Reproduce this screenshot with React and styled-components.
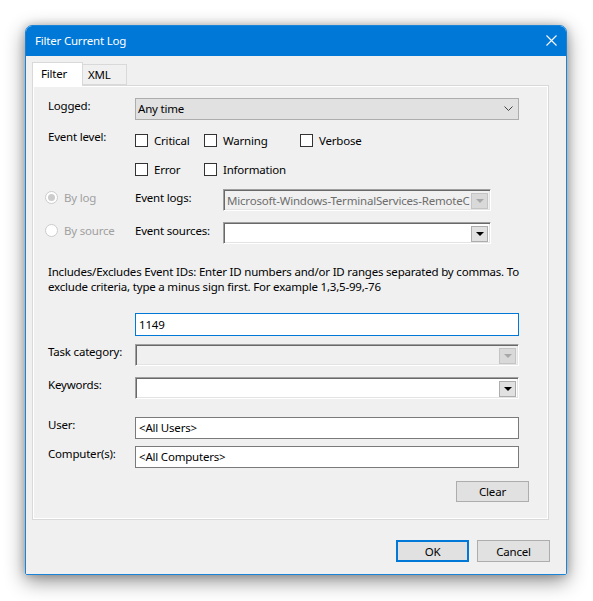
import React from 'react';
import styled, {createGlobalStyle} from "styled-components";

const GlobalStyle = createGlobalStyle`
  html, body {
    margin: 0;
    background: #fff;
  }
  body {
    font-family: "Noto Sans", "Open Sans", sans-serif;
    font-size: 11.5px;
    letter-spacing: -0.2px;
    color: #000;
  }
  * { box-sizing: border-box; }
`;

function Chevron() {
  return (
    <svg width="9" height="5" viewBox="0 0 9 5">
      <path d="M0.5 0.5 L4.5 4.5 L8.5 0.5" fill="none" stroke="#444" strokeWidth="1"/>
    </svg>
  );
}

function ComboBox({disabled, value, width}) {
  return (
    <Combo $disabled={disabled} $width={width}>
      <ComboText $disabled={disabled}>{value}</ComboText>
      <DropButton $disabled={disabled}><Triangle $disabled={disabled}/></DropButton>
    </Combo>
  );
}

function Check({label}) {
  return (
    <CheckItem>
      <CheckBox/>
      <span>{label}</span>
    </CheckItem>
  );
}

function App() {
  return (
    <>
      <GlobalStyle/>
      <Page>
        <Window>
          <TitleBar>
            <Title>Filter Current Log</Title>
            <CloseIcon>
              <svg width="11" height="11" viewBox="0 0 11 11">
                <path d="M0.5 0.5 L10.5 10.5 M10.5 0.5 L0.5 10.5" stroke="#fff" strokeWidth="1.1"/>
              </svg>
            </CloseIcon>
          </TitleBar>
          <Body>
            <TabStrip>
              <Tab $active>Filter</Tab>
              <Tab>XML</Tab>
            </TabStrip>
            <Panel>
              <Row>
                <Label>Logged:</Label>
                <DropList>
                  <span>Any time</span>
                  <Chevron/>
                </DropList>
              </Row>

              <Row $mt={9}>
                <Label>Event level:</Label>
                <LevelGrid>
                  <Check label="Critical"/>
                  <Check label="Warning"/>
                  <Check label="Verbose"/>
                  <Check label="Error"/>
                  <Check label="Information"/>
                </LevelGrid>
              </Row>

              <Row $mt={11}>
                <RadioItem>
                  <Radio $checked/>
                  <span>By log</span>
                </RadioItem>
                <Label $w={88} $pt={1}>Event logs:</Label>
                <ComboBox disabled width={268} value="Microsoft-Windows-TerminalServices-RemoteC"/>
              </Row>

              <Row $mt={11}>
                <RadioItem>
                  <Radio/>
                  <span>By source</span>
                </RadioItem>
                <Label $w={88} $pt={1}>Event sources:</Label>
                <ComboBox width={268} value=""/>
              </Row>

              <Description>
                Includes/Excludes Event IDs: Enter ID numbers and/or ID ranges separated by commas. To<br/>
                exclude criteria, type a minus sign first. For example 1,3,5-99,-76
              </Description>

              <Row $mt={19}>
                <Label/>
                <TextInput $focused $h={23}>1149</TextInput>
              </Row>

              <Row $mt={8}>
                <Label>Task category:</Label>
                <ComboBox disabled value=""/>
              </Row>

              <Row $mt={11}>
                <Label>Keywords:</Label>
                <ComboBox value=""/>
              </Row>

              <Row $mt={18}>
                <Label>User:</Label>
                <TextInput>&lt;All Users&gt;</TextInput>
              </Row>

              <Row $mt={7}>
                <Label>Computer(s):</Label>
                <TextInput>&lt;All Computers&gt;</TextInput>
              </Row>

              <ClearRow>
                <Button $h={21}>Clear</Button>
              </ClearRow>
            </Panel>

            <ButtonRow>
              <Button $default>OK</Button>
              <Button>Cancel</Button>
            </ButtonRow>
          </Body>
        </Window>
      </Page>
    </>
  );
}

const Page = styled.div`
  padding: 25px 26px 26px 25px;
`;

const Window = styled.div`
  width: 542px;
  height: 550px;
  display: flex;
  flex-direction: column;
  border: 1px solid #1a84d8;
  border-radius: 7px 7px 2px 2px;
  overflow: hidden;
  box-shadow: 0 6px 20px rgba(0, 0, 0, 0.45), 0 0 8px rgba(0, 0, 0, 0.2);
`;

const TitleBar = styled.div`
  height: 30px;
  flex: none;
  display: flex;
  align-items: center;
  justify-content: space-between;
  padding: 0 8px 1px 9px;
  background: #0078d7;
`;

const Title = styled.span`
  color: #fff;
  font-size: 11.5px;
`;

const CloseIcon = styled.span`
  display: flex;
  margin-right: 1px;
`;

const Body = styled.div`
  flex: 1;
  display: flex;
  flex-direction: column;
  background: #f0f0f0;
  padding: 6px 16px 12px 6px;
`;

const TabStrip = styled.div`
  display: flex;
  align-items: flex-end;
  height: 23px;
  position: relative;
  z-index: 1;
`;

const Tab = styled.div`
  height: ${p => p.$active ? 24 : 21}px;
  width: ${p => p.$active ? 51 : 44}px;
  margin-bottom: ${p => p.$active ? -1 : 0}px;
  padding: ${p => p.$active ? '3px 0 0 8px' : '2px 0 0 5px'};
  border: 1px solid #d9d9d9;
  border-bottom: ${p => p.$active ? 'none' : '1px solid #d9d9d9'};
  border-left: ${p => p.$active ? '1px solid #d9d9d9' : 'none'};
  background: ${p => p.$active ? '#fff' : '#f0f0f0'};
  line-height: 15px;
`;

const Panel = styled.div`
  height: 435px;
  margin-right: 1px;
  border: 1px solid #d9d9d9;
  box-shadow: inset 1px 1px 0 #fff, inset -1px -1px 0 #fff;
  padding: 12px 29px 17px 15px;
  display: flex;
  flex-direction: column;
`;

const Row = styled.div`
  display: flex;
  align-items: flex-start;
  margin-top: ${p => p.$mt || 0}px;
`;

const Label = styled.div`
  flex: none;
  width: ${p => p.$w || 87}px;
  padding-top: ${p => p.$pt || 0}px;
  line-height: 15px;
  white-space: nowrap;
`;

const DropList = styled.div`
  flex: 1;
  height: 22px;
  display: flex;
  align-items: center;
  justify-content: space-between;
  padding: 0 5px 1px 2px;
  background: #e1e1e1;
  border: 1px solid #adadad;
`;

const LevelGrid = styled.div`
  display: grid;
  grid-template-columns: 69px 96px auto;
  grid-auto-rows: 18px;
  row-gap: 11px;
  padding-top: 2px;
`;

const CheckItem = styled.label`
  display: flex;
  align-items: center;
  gap: 6px;
  white-space: nowrap;
`;

const CheckBox = styled.span`
  width: 13px;
  height: 13px;
  flex: none;
  border: 1px solid #333;
  background: #fff;
`;

const RadioItem = styled.div`
  flex: none;
  width: 90px;
  margin-left: -3px;
  display: flex;
  align-items: center;
  gap: 6px;
  height: 16px;
  color: #a0a0a0;
`;

const Radio = styled.span`
  width: 13px;
  height: 13px;
  flex: none;
  border-radius: 50%;
  border: 1px solid #cccccc;
  background: #fff;
  display: flex;
  align-items: center;
  justify-content: center;
  &::after {
    content: "";
    display: ${p => p.$checked ? 'block' : 'none'};
    width: 7px;
    height: 7px;
    border-radius: 50%;
    background: #cccccc;
  }
`;

const Combo = styled.div`
  ${p => p.$width ? `width: ${p.$width}px; flex: none;` : 'flex: 1;'}
  height: 22px;
  display: flex;
  align-items: center;
  padding: 0 2px 0 3px;
  background: ${p => p.$disabled ? '#f0f0f0' : '#fff'};
  border-style: solid;
  border-width: 1px;
  border-color: #a0a0a0 #fff #fff #a0a0a0;
  box-shadow: inset 1px 1px 0 #696969, inset -1px -1px 0 #e3e3e3;
  overflow: hidden;
`;

const ComboText = styled.span`
  flex: 1;
  min-width: 0;
  overflow: hidden;
  white-space: nowrap;
  color: ${p => p.$disabled ? '#6d6d6d' : '#000'};
`;

const DropButton = styled.span`
  width: 17px;
  height: 16px;
  flex: none;
  margin-top: 1px;
  display: flex;
  align-items: center;
  justify-content: center;
  background: ${p => p.$disabled ? '#d9d9d9' : '#e1e1e1'};
  border: 1px solid ${p => p.$disabled ? '#c4c4c4' : '#adadad'};
`;

const Triangle = styled.span`
  width: 0;
  height: 0;
  margin-top: 1px;
  border-left: 4px solid transparent;
  border-right: 4px solid transparent;
  border-top: 4px solid ${p => p.$disabled ? '#a8a8a8' : '#000'};
`;

const Description = styled.p`
  margin: 20px 0 0 0;
  line-height: 15px;
  white-space: nowrap;
`;

const TextInput = styled.div`
  flex: 1;
  height: ${p => p.$h || 22}px;
  display: flex;
  align-items: center;
  padding: 0 3px 1px;
  background: #fff;
  border: 1px solid ${p => p.$focused ? '#0078d7' : '#7a7a7a'};
`;

const ClearRow = styled.div`
  display: flex;
  justify-content: flex-end;
  margin: 13px -10px 0 0;
`;

const Button = styled.div`
  width: 73px;
  height: ${p => p.$h || 22}px;
  display: flex;
  align-items: center;
  justify-content: center;
  background: #e1e1e1;
  border: ${p => p.$default ? '2px solid #0078d7' : '1px solid #adadad'};
`;

const ButtonRow = styled.div`
  display: flex;
  justify-content: flex-end;
  gap: 8px;
  margin-top: 20px;
`;

export default App;
